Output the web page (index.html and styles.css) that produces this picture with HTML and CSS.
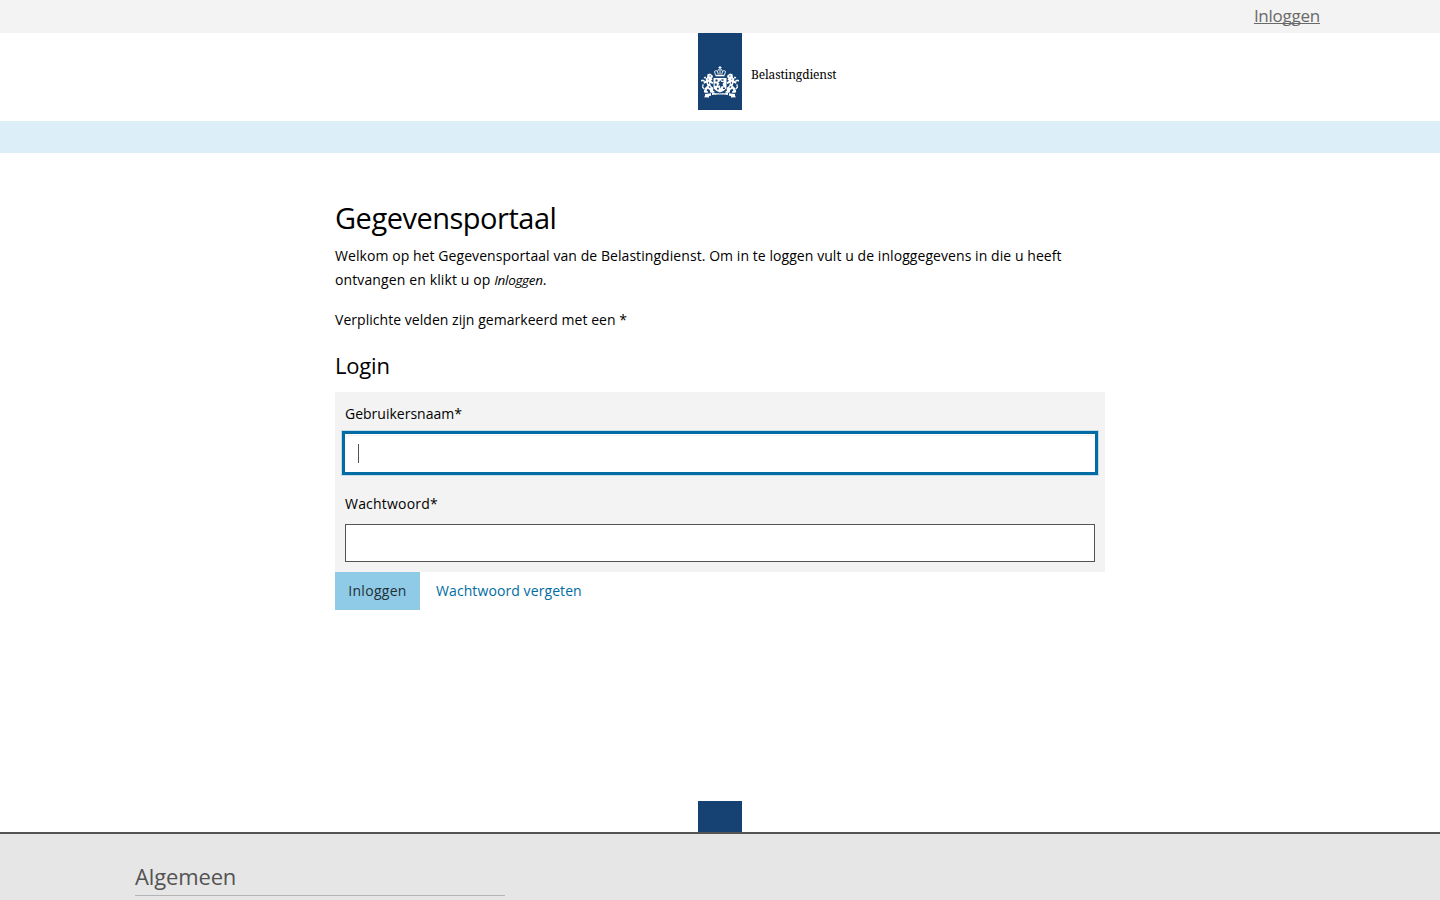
FILE: index.html
```
<!DOCTYPE html>
<html lang="nl">
<head>
<meta charset="utf-8">
<title>Gegevensportaal - Belastingdienst</title>
<link rel="stylesheet" href="styles.css">
</head>
<body>
<nav class="topbar"><a class="top-link" href="#">Inloggen</a></nav>
<header class="brand">
  <div class="ribbon">
    <svg class="arms" viewBox="0 0 38 32" width="38" height="32" fill="#fff" aria-hidden="true">
      <path d="M18.500 0h1v1h1v1h-1v1h-1v-1h-1v-1h1z"/>
      <path d="M14.500 9L13.500 5.500q1.500-2 3 0 1-3 2.500-2.500 1.500-.5 2.500 2.500 1.500-2 3 0L23.500 9M16.500 5.500l.8 3M21.500 5.500l-.8 3M19 4v4.500" fill="none" stroke="#fff" stroke-width=".9"/>
      <path d="M14.500 8.800h9v1.500h-9z"/>
      <path fill-rule="evenodd" d="M12.500 12h13v8.500c0 3.200-3.500 5-6.500 6-3-1-6.500-2.800-6.500-6zM14.500 13.500v2h2v-2zM20.500 13.300v1.500h2v-1.500zM17 16l1.500 1.500L17 19.500h2l.5 3 1.200-2.500 1.800.5-1-2.500 1.500-2h-2.500L19 14l-.5 2zM13.700 17.500v2.300h2v-2.300zM22 21.500V23h2v-1.500zM16 21.800v1.700h1.800v-1.700z"/>
      <g id="lion">
        <path fill-rule="evenodd" d="M6.500 8.200L9 7.500l2.500 1.700.5 2-1.500.8 1 1.500-1.500 1.200 2.500 1.800-1 1.500-2.500-1.200.8 3 2.700 2.200-.5 2.500 1.500 1v1.200H9.500l-.8-2.700-2.200-1.300-1 1.800 1.500 1v1.200H3.500l-.7-1.200 1.200-3.500 2.300-2.300-.8-3-2.500 1-.5-1.700 2.500-1.500-.5-2.300 1.500-.5zM8.500 9.500v1h1.300v-1zM6.500 12.500l.5 1.200 1.200-.7zM7 16l.3 2 1-.5-.4-1.700zM7.500 20.700l1.500 1.500.5-1-1-1.200z"/>
        <path d="M0 14l2-.5 2 1.300-.3 1.200-2-.8L0 15.500zM1.500 18l1.300.5-.6 2.500 1.500 1.500-.8 1-1.900-2zM4.500 10.500l-1.800.8.5 1.200 1.800-.5z"/>
      </g>
      <use href="#lion" transform="translate(38 0) scale(-1 1)"/>
      <path d="M11 26.500c4 1.200 12 1.200 16 0v2.600c-4-.8-12-.8-16 0zM4 28l6-.8v2.500l-2 .3v1.500l-5-.2 1-1.400zM34 28l-6-.8v2.500l2 .3v1.500l5-.2-1-1.400z"/>
    </svg>
  </div>
  <span class="brand-name">Belastingdienst</span>
</header>
<div class="blue-band"></div>
<main class="content">
  <h1 class="title">Gegevensportaal</h1>
  <p class="text">Welkom op het Gegevensportaal van de Belastingdienst. Om in te loggen vult u de inloggegevens in die u heeft<br><span class="line-two">ontvangen en klikt u op </span><em class="em">Inloggen</em>.</p>
  <p class="text required">Verplichte velden zijn gemarkeerd met een *</p>
  <h2 class="subtitle">Login</h2>
  <form>
    <div class="fields">
      <label class="label" for="user">Gebruikersnaam*</label>
      <input class="input active" id="user" type="text">
      <label class="label second" for="pass">Wachtwoord*</label>
      <input class="input" id="pass" type="password">
    </div>
    <div class="actions">
      <button class="button" type="button">Inloggen</button>
      <a class="forgot" href="#">Wachtwoord vergeten</a>
    </div>
  </form>
</main>
<div class="foot-ribbon"></div>
<footer class="footer"><h2 class="footer-title">Algemeen</h2></footer>
</body>
</html>
```
FILE: styles.css
```
* { box-sizing: border-box; }
body { margin: 0; height: 900px; overflow: hidden; display: flex; flex-direction: column; background: #fff; color: #000; font: 14px/24px "Open Sans", "Noto Sans", sans-serif; }
h1, h2, p { margin: 0; font-weight: 400; }
.topbar { height: 33px; background: #f3f3f3; padding-right: 120px; display: flex; justify-content: flex-end; }
.top-link { color: #696969; font-size: 17px; line-height: 31px; letter-spacing: -.25px; text-underline-offset: 1px; text-decoration-thickness: 1px; text-decoration-skip-ink: none; }
.brand { height: 88px; display: flex; padding-left: 698px; }
.ribbon { width: 44px; height: 77px; background: #154273; padding: 33px 3px 0; }
.arms { display: block; }
.brand-name { margin: 30px 0 0 9px; font: 12px/24px "Noto Serif", "DejaVu Serif Condensed", "DejaVu Serif", serif; letter-spacing: -.14px; }
.blue-band { height: 32px; background: #dceff9; }
.content { width: 770px; margin: 0 auto; flex: 1; padding-top: 46px; }
.title { font-size: 29px; line-height: 38px; height: 45px; letter-spacing: -.49px; }
.text { white-space: nowrap; letter-spacing: .065px; }
.line-two { letter-spacing: .12px; }
.em { font-size: 13.5px; letter-spacing: -.32px; }
.required { margin-top: 16px; letter-spacing: .04px; }
.subtitle { font-size: 22px; line-height: 30px; margin: 18px 0 12px; letter-spacing: -.2px; }
.fields { background: #f3f3f3; height: 180px; padding: 10px; }
.label { display: block; height: 32px; }
.second { margin-top: 20px; letter-spacing: .2px; }
.input { display: block; width: 750px; height: 38px; border: 1px solid #535353; border-radius: 0; background: #fff; padding: 0 12px; outline: 0; }
.active { border-color: #fff; box-shadow: 0 0 0 3px #006ca3, 0 0 0 4px #c5dce8; background: linear-gradient(#535353, #535353) 12px 9px / 1px 19px no-repeat, linear-gradient(#f3f3f3, #f3f3f3) 0 0 / 100% 1px no-repeat #fff; }
.actions { display: flex; }
.button { width: 85px; height: 38px; border: 0; padding: 0; background: #8fcae7; color: #222f36; font: inherit; letter-spacing: .3px; }
.forgot { margin-left: 16px; line-height: 38px; color: #006ca3; text-decoration: none; letter-spacing: .09px; }
.foot-ribbon { width: 44px; height: 31px; margin: 0 auto; background: #154273; }
.footer { height: 68px; border-top: 2px solid #535353; background: #e6e6e6; padding: 27px 135px 0; }
.footer-title { width: 370px; height: 35px; border-bottom: 1px solid #b4b4b4; color: #535353; font-size: 22px; line-height: 30px; letter-spacing: -.14px; }
```
